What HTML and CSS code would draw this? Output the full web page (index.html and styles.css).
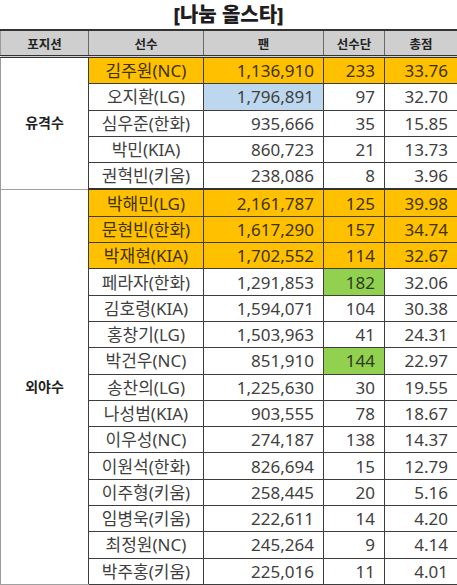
FILE: index.html
```html
<!DOCTYPE html>
<html lang="ko">
<head>
    <meta charset="UTF-8">
    <meta name="viewport" content="width=device-width, initial-scale=1.0">
    <title>나눔 올스타</title>
    <link rel="stylesheet" href="styles.css">
</head>
<body>
    <div class="sheet">
        <h1 class="sheet-title">[나눔 올스타]</h1>

        <table class="stars-table">
            <colgroup>
                <col class="col-pos">
                <col class="col-name">
                <col class="col-fan">
                <col class="col-team">
                <col class="col-score">
            </colgroup>
            <thead>
                <tr>
                    <th>포지션</th>
                    <th>선수</th>
                    <th>팬</th>
                    <th>선수단</th>
                    <th>총점</th>
                </tr>
            </thead>
            <tbody>
                <tr>
                    <td class="pos" rowspan="5">유격수</td>
                    <td class="name hl-orange">김주원(NC)</td>
                    <td class="num hl-orange">1,136,910</td>
                    <td class="num hl-orange">233</td>
                    <td class="num hl-orange">33.76</td>
                </tr>
                <tr>
                    <td class="name">오지환(LG)</td>
                    <td class="num hl-blue">1,796,891</td>
                    <td class="num">97</td>
                    <td class="num">32.70</td>
                </tr>
                <tr>
                    <td class="name">심우준(한화)</td>
                    <td class="num">935,666</td>
                    <td class="num">35</td>
                    <td class="num">15.85</td>
                </tr>
                <tr>
                    <td class="name">박민(KIA)</td>
                    <td class="num">860,723</td>
                    <td class="num">21</td>
                    <td class="num">13.73</td>
                </tr>
                <tr>
                    <td class="name">권혁빈(키움)</td>
                    <td class="num">238,086</td>
                    <td class="num">8</td>
                    <td class="num">3.96</td>
                </tr>

                <tr class="group-start">
                    <td class="pos" rowspan="15">외야수</td>
                    <td class="name hl-orange">박해민(LG)</td>
                    <td class="num hl-orange">2,161,787</td>
                    <td class="num hl-orange">125</td>
                    <td class="num hl-orange">39.98</td>
                </tr>
                <tr>
                    <td class="name hl-orange">문현빈(한화)</td>
                    <td class="num hl-orange">1,617,290</td>
                    <td class="num hl-orange">157</td>
                    <td class="num hl-orange">34.74</td>
                </tr>
                <tr>
                    <td class="name hl-orange">박재현(KIA)</td>
                    <td class="num hl-orange">1,702,552</td>
                    <td class="num hl-orange">114</td>
                    <td class="num hl-orange">32.67</td>
                </tr>
                <tr>
                    <td class="name">페라자(한화)</td>
                    <td class="num">1,291,853</td>
                    <td class="num hl-green">182</td>
                    <td class="num">32.06</td>
                </tr>
                <tr>
                    <td class="name">김호령(KIA)</td>
                    <td class="num">1,594,071</td>
                    <td class="num">104</td>
                    <td class="num">30.38</td>
                </tr>
                <tr>
                    <td class="name">홍창기(LG)</td>
                    <td class="num">1,503,963</td>
                    <td class="num">41</td>
                    <td class="num">24.31</td>
                </tr>
                <tr>
                    <td class="name">박건우(NC)</td>
                    <td class="num">851,910</td>
                    <td class="num hl-green">144</td>
                    <td class="num">22.97</td>
                </tr>
                <tr>
                    <td class="name">송찬의(LG)</td>
                    <td class="num">1,225,630</td>
                    <td class="num">30</td>
                    <td class="num">19.55</td>
                </tr>
                <tr>
                    <td class="name">나성범(KIA)</td>
                    <td class="num">903,555</td>
                    <td class="num">78</td>
                    <td class="num">18.67</td>
                </tr>
                <tr>
                    <td class="name">이우성(NC)</td>
                    <td class="num">274,187</td>
                    <td class="num">138</td>
                    <td class="num">14.37</td>
                </tr>
                <tr>
                    <td class="name">이원석(한화)</td>
                    <td class="num">826,694</td>
                    <td class="num">15</td>
                    <td class="num">12.79</td>
                </tr>
                <tr>
                    <td class="name">이주형(키움)</td>
                    <td class="num">258,445</td>
                    <td class="num">20</td>
                    <td class="num">5.16</td>
                </tr>
                <tr>
                    <td class="name">임병욱(키움)</td>
                    <td class="num">222,611</td>
                    <td class="num">14</td>
                    <td class="num">4.20</td>
                </tr>
                <tr>
                    <td class="name">최정원(NC)</td>
                    <td class="num">245,264</td>
                    <td class="num">9</td>
                    <td class="num">4.14</td>
                </tr>
                <tr>
                    <td class="name">박주홍(키움)</td>
                    <td class="num">225,016</td>
                    <td class="num">11</td>
                    <td class="num">4.01</td>
                </tr>
            </tbody>
        </table>
    </div>
</body>
</html>
```

FILE: styles.css
```css
/* General Styles */
body {
    margin: 0;
    background: #ffffff;
    font-family: "Noto Sans", "Noto Sans CJK KR", sans-serif;
    color: #3f3f3f;
}

.sheet {
    width: 457px;
    overflow: hidden;
}

.sheet-title {
    margin: 0;
    height: 29px;
    line-height: 29px;
    text-align: center;
    font-size: 20px;
    font-weight: 900;
    color: #1e1e1e;
}

/* Table */
.stars-table {
    width: 457px;
    table-layout: fixed;
    border-collapse: collapse;
}

.col-pos { width: 88px; }
.col-name { width: 115px; }
.col-fan { width: 120px; }
.col-team { width: 61px; }
.col-score { width: 73px; }

.stars-table th {
    height: 24px;
    padding: 0;
    background: #cfcfcf;
    border: 1px solid #6a6a6a;
    border-top: 2px solid #333;
    border-bottom: 3px double #333;
    font-size: 12.5px;
    font-weight: 700;
    color: #222;
}

.stars-table th:first-child {
    border-left: 1px solid #9a9a9a;
}

.stars-table td {
    height: 25.3px;
    padding: 0 9px 0 0;
    border: 1px solid #3d3d3d;
    font-size: 17px;
    line-height: 1;
    white-space: nowrap;
}

.stars-table td.pos {
    padding: 0;
    border-left: 1px solid #9a9a9a;
    border-bottom: 1px solid #a0a0a0;
    border-right: 1px solid #3d3d3d;
    text-align: center;
    font-size: 14px;
    font-weight: 700;
    color: #222;
}

.stars-table td.name {
    padding: 0;
    text-align: center;
}

.stars-table td.num {
    text-align: right;
}

.group-start td {
    border-top: 2px solid #333;
}

.stars-table .group-start td.pos {
    border-top: 1px solid #a0a0a0;
}

/* Highlights */
.hl-orange {
    background: #ffc000;
    color: #3d3300;
}

.hl-blue {
    background: #bdd7ee;
}

.hl-green {
    background: #92d050;
    color: #2d3a1d;
}
```
